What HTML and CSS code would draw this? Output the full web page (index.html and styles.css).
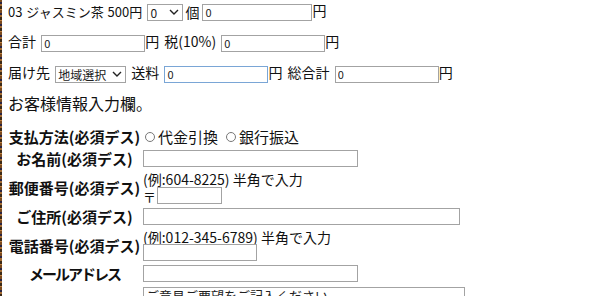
FILE: index.html
```html
<!DOCTYPE html>
<html lang="ja">
<head>
<meta charset="utf-8">
<title>注文フォーム</title>
<link rel="stylesheet" href="styles.css">
</head>
<body>
<div class="page">
  <div class="row"><span class="item">03 ジャスミン茶 500円</span> <select class="sel sel-qty"><option>0</option></select><span class="tight">個</span><input class="box box-wide" type="text" value="0">円</div>
  <div class="row">合計 <input class="box" type="text" value="0">円 税(10%) <input class="box" type="text" value="0">円</div>
  <div class="row">届け先 <select class="sel sel-area"><option>地域選択</option></select> 送料 <input class="box box-focus" type="text" value="0">円 総合計 <input class="box" type="text" value="0">円</div>
  <p class="intro">お客様情報入力欄。</p>
  <div class="form">
    <div class="label">支払方法(必須デス)</div>
    <div class="field field-pay">
      <label class="radio"><span class="dot"></span>代金引換</label>
      <label class="radio"><span class="dot"></span>銀行振込</label>
    </div>

    <div class="label">お名前(必須デス)</div>
    <div class="field"><input class="box box-name" type="text"></div>

    <div class="label">郵便番号(必須デス)</div>
    <div class="field">
      <div class="note">(例:604-8225) 半角で入力</div>
      <div class="zip">〒<input class="box box-zip" type="text"></div>
    </div>

    <div class="label">ご住所(必須デス)</div>
    <div class="field"><input class="box box-addr" type="text"></div>

    <div class="label">電話番号(必須デス)</div>
    <div class="field">
      <div class="note">(例:012-345-6789) 半角で入力</div>
      <input class="box box-tel" type="text">
    </div>

    <div class="label label-mail">メールアドレス</div>
    <div class="field"><input class="box box-name" type="text"></div>

    <div class="label"></div>
    <div class="field"><textarea class="memo" placeholder="ご意見ご要望をご記入ください。"></textarea></div>
  </div>
</div>
</body>
</html>
```

FILE: styles.css
```css
html, body {
  margin: 0;
  padding: 0;
  background: #fff;
}

body {
  font-family: "Noto Sans CJK JP", "Noto Sans", sans-serif;
  color: #111;
  font-size: 13px;
}

.page {
  min-height: 296px;
  border-left: 2px solid transparent;
  border-image: repeating-linear-gradient(to bottom, #7a4a1e 0 3px, #2a2440 3px 5px, #a56d33 5px 7px, #3b2a18 7px 10px, #c08040 10px 11px) 1;
  padding: 1px 0 0 6px;
  box-sizing: border-box;
}

.row {
  height: 18px;
  line-height: 18px;
  margin-bottom: 13px;
  white-space: nowrap;
  font-size: 14px;
  word-spacing: 2px;
}

.row > * {
  vertical-align: middle;
}

.item {
  font-size: 13px;
  word-spacing: 1px;
}

.tight {
  margin: 0 3px 0 2px;
}

.box {
  box-sizing: border-box;
  height: 17px;
  width: 104px;
  border: 1px solid #a3a3a3;
  padding: 0 2px;
  margin: 0;
  font-family: "Noto Sans CJK JP", sans-serif;
  font-size: 11px;
  word-spacing: 0;
  color: #222;
  background: #fff;
  outline: none;
}

.box-wide { width: 110px; }
.box-focus { border-color: #7aa6d6; }

.sel {
  box-sizing: border-box;
  height: 17px;
  border: 1px solid #a3a3a3;
  padding: 0 0 0 2px;
  margin: 0;
  font-family: "Noto Sans CJK JP", sans-serif;
  font-size: 12px;
  word-spacing: 0;
  line-height: 15px;
  color: #222;
  background: #fff;
  -webkit-appearance: none;
  appearance: none;
  background-image: url("data:image/svg+xml;utf8,<svg xmlns='http://www.w3.org/2000/svg' width='10' height='6'><path d='M1 1 L5 5 L9 1' fill='none' stroke='%23222' stroke-width='1.4'/></svg>");
  background-repeat: no-repeat;
  background-position: right 3px center;
}

.sel-qty { width: 36px; }
.sel-area { width: 71px; font-size: 12px; }

.intro {
  font-size: 16px;
  line-height: 18px;
  margin: 0 0 16px 0;
}

.form {
  display: grid;
  grid-template-columns: 133px 1fr;
  column-gap: 2px;
  row-gap: 4px;
}

.label {
  font-size: 15px;
  font-weight: bold;
  text-align: center;
  align-self: center;
  white-space: nowrap;
  line-height: 18px;
  color: #111;
}

.label-mail {
  letter-spacing: -2px;
}

.field {
  display: flex;
  flex-direction: column;
  align-items: flex-start;
}

.field-pay {
  flex-direction: row;
  align-items: center;
  height: 17px;
  gap: 6px;
}

.radio {
  display: flex;
  align-items: center;
  font-size: 15px;
  line-height: 17px;
}

.dot {
  width: 10px;
  height: 10px;
  border: 1px solid #777;
  border-radius: 50%;
  margin: 0 3px 0 2px;
  box-sizing: border-box;
}

.note {
  font-size: 14px;
  line-height: 14px;
  white-space: nowrap;
}

.zip {
  display: flex;
  align-items: flex-end;
  font-size: 13px;
  line-height: 14px;
  margin-top: 1px;
}

.box-name { width: 215px; }
.box-zip { width: 65px; margin-left: 1px; }
.box-addr { width: 317px; }
.box-tel { width: 114px; }

.memo {
  box-sizing: border-box;
  width: 322px;
  height: 60px;
  margin: 0;
  border: 1px solid #a3a3a3;
  padding: 0 2px;
  font-family: "Noto Sans CJK JP", sans-serif;
  font-size: 13px;
  line-height: 15px;
  resize: none;
  overflow-y: scroll;
}

.memo::placeholder {
  color: #222;
  opacity: 1;
}

.memo::-webkit-scrollbar { width: 13px; }
.memo::-webkit-scrollbar-track { background: #f0f0f0; }
.memo::-webkit-scrollbar-thumb { background: #f0f0f0; }
```
